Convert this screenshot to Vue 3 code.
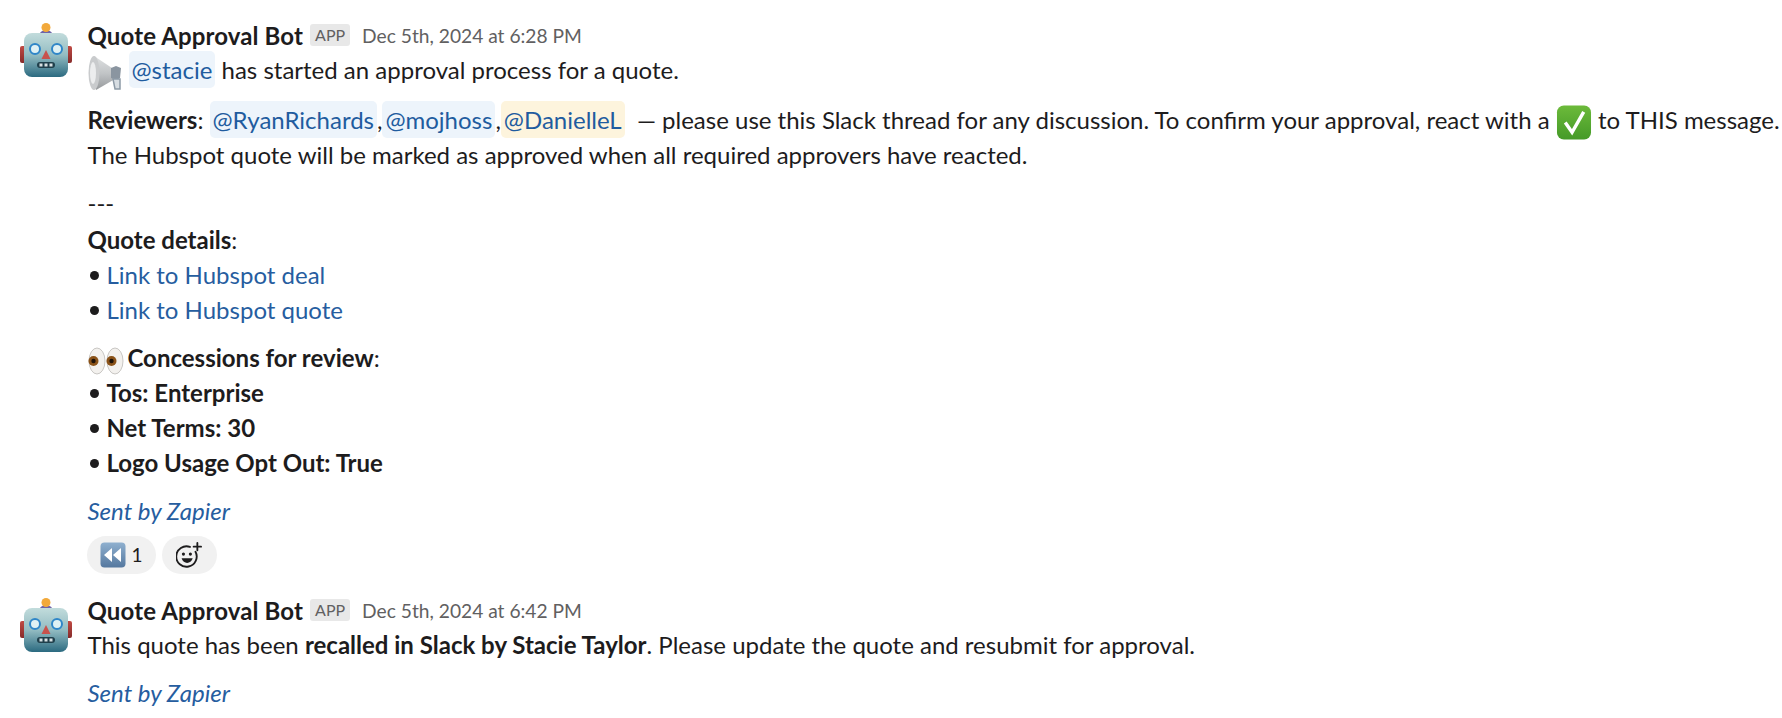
<script setup>
const concessions = ['Tos: Enterprise', 'Net Terms: 30', 'Logo Usage Opt Out: True']
</script>

<template>
  <main class="page">
    <svg class="defs" width="0" height="0" aria-hidden="true">
      <defs>
        <linearGradient id="face" x1="0" y1="0" x2="0" y2="1">
          <stop offset="0" stop-color="#c2dcdc" />
          <stop offset="0.5" stop-color="#93bcc2" />
          <stop offset="1" stop-color="#2b6a80" />
        </linearGradient>
        <linearGradient id="ear" x1="0" y1="0" x2="0" y2="1">
          <stop offset="0" stop-color="#c04a44" />
          <stop offset="1" stop-color="#862b2a" />
        </linearGradient>
        <linearGradient id="bell" x1="0" y1="0" x2="0" y2="1">
          <stop offset="0" stop-color="#dfe1e2" />
          <stop offset="0.5" stop-color="#c2c5c7" />
          <stop offset="1" stop-color="#96999c" />
        </linearGradient>
        <linearGradient id="rew" x1="0" y1="0" x2="0" y2="1">
          <stop offset="0" stop-color="#8fb0cf" />
          <stop offset="1" stop-color="#55789f" />
        </linearGradient>
        <linearGradient id="chk" x1="0" y1="0" x2="0" y2="1">
          <stop offset="0" stop-color="#6cba3a" />
          <stop offset="1" stop-color="#459a28" />
        </linearGradient>
        <symbol id="robot" viewBox="0 0 52 54">
          <rect x="0" y="23" width="6" height="17" rx="2" fill="url(#ear)" />
          <rect x="46" y="23" width="6" height="17" rx="2" fill="url(#ear)" />
          <path d="M20 11c0-5 12-5 12 0z" fill="#6f64a8" />
          <circle cx="26" cy="4.500" r="4.500" fill="#f2a93b" />
          <rect x="4" y="10" width="44" height="44" rx="8" fill="url(#face)" />
          <circle cx="15" cy="26" r="5" fill="#dff1f4" stroke="#2f86c8" stroke-width="2" />
          <circle cx="37" cy="26" r="5" fill="#dff1f4" stroke="#2f86c8" stroke-width="2" />
          <path d="M26 27l4.500 9h-9z" fill="#c8524c" />
          <rect x="17" y="39" width="18" height="6" rx="3" fill="#1f3f4b" />
          <path d="M21 40.500v3M26 40.500v3M31 40.500v3" stroke="#d7e0e2" stroke-width="3" />
        </symbol>
      </defs>
    </svg>

    <article class="message first">
      <svg class="avatar"><use href="#robot" /></svg>
      <div class="content">
        <header class="meta">
          <strong class="name">Quote Approval Bot</strong>
          <span class="badge">APP</span>
          <span class="time">Dec 5th, 2024 at 6:28 PM</span>
        </header>
        <p class="para intro">
          <svg class="emoji horn" viewBox="0 0 34 36" aria-hidden="true">
            <path d="M6 1L27 15v9L8 35z" fill="url(#bell)" />
            <ellipse cx="6" cy="18" rx="5.500" ry="17" fill="#c9cbcd" />
            <ellipse cx="5" cy="18" rx="3" ry="11" fill="#ecedee" />
            <path d="M23 13l5-2 5 2-1 10-3 2-6-2z" fill="#8a95a0" />
            <path d="M25 24h7v10h-5z" fill="#d7dde2" stroke="#8d9aa6" stroke-width="1.500" />
          </svg>
          <span class="mention">@stacie</span> has started an approval process for a quote.
        </p>
        <p class="para">
          <strong>Reviewers</strong>: <span class="mention">@RyanRichards</span>,<span class="mention">@mojhoss</span>,<span class="mention self">@DanielleL</span>
          &nbsp;— please use this Slack thread for any discussion. To confirm your approval, react with a
          <svg class="emoji check" viewBox="0 0 36 36" aria-hidden="true">
            <rect x="0.500" y="0.500" width="35" height="35" rx="7" fill="url(#chk)" />
            <path d="M9 18l7 10L28 7" fill="none" stroke="#fff" stroke-width="3.500" />
          </svg>
          to THIS message.<br />The Hubspot quote will be marked as approved when all required approvers have reacted.
        </p>
        <p class="para tight">---<br /><span class="details"><strong>Quote details</strong>:</span></p>
        <ul class="list">
          <li><a class="link">Link to Hubspot deal</a></li>
          <li><a class="link">Link to Hubspot quote</a></li>
        </ul>
        <p class="para tight">
          <svg class="emoji eyes" viewBox="0 0 36 28" aria-hidden="true">
            <ellipse cx="9" cy="14" rx="8" ry="13" fill="#f3f1ee" stroke="#c9c7c4" stroke-width="1" />
            <ellipse cx="27" cy="14" rx="8" ry="13" fill="#f3f1ee" stroke="#c9c7c4" stroke-width="1" />
            <circle cx="5.500" cy="14" r="5" fill="#8a5218" />
            <circle cx="23.500" cy="14" r="5" fill="#8a5218" />
            <circle cx="5.500" cy="14" r="2.200" fill="#1d1208" />
            <circle cx="23.500" cy="14" r="2.200" fill="#1d1208" />
          </svg>
          <strong>Concessions for review</strong>:
        </p>
        <ul class="list">
          <li v-for="item in concessions" :key="item"><strong>{{ item }}</strong></li>
        </ul>
        <a class="link sent">Sent by Zapier</a>
        <div class="reactions">
          <span class="pill">
            <svg class="rewind" viewBox="0 0 26 26" aria-hidden="true">
              <rect x="0.500" y="0.500" width="25" height="25" rx="4" fill="url(#rew)" />
              <path d="M12 6v14L4 13zM21 6v14l-8-7z" fill="#fff" />
            </svg>
            <span class="count">1</span>
          </span>
          <span class="pill add">
            <svg class="smile" viewBox="0 0 28 28" aria-hidden="true">
              <path d="M21 10.500A11 11 0 1 1 15 5.300" fill="none" stroke="#1d1c1d" stroke-width="2" stroke-linecap="round" />
              <circle cx="8" cy="13" r="1.700" fill="#1d1c1d" />
              <circle cx="15.500" cy="13" r="1.700" fill="#1d1c1d" />
              <path d="M6 17.500h12c-1 3.500-3.500 5-6 5s-5-1.500-6-5z" fill="#1d1c1d" />
              <path d="M23 1v8M19 5h8" stroke="#1d1c1d" stroke-width="2" stroke-linecap="round" />
            </svg>
          </span>
        </div>
      </div>
    </article>

    <article class="message second">
      <svg class="avatar"><use href="#robot" /></svg>
      <div class="content">
        <header class="meta">
          <strong class="name">Quote Approval Bot</strong>
          <span class="badge">APP</span>
          <span class="time">Dec 5th, 2024 at 6:42 PM</span>
        </header>
        <p class="para">This quote has been <strong>recalled in Slack by Stacie Taylor</strong>. Please update the quote and resubmit for approval.</p>
        <a class="link sent">Sent by Zapier</a>
      </div>
    </article>
  </main>
</template>

<style>
html, body { background: #fff; overflow: hidden; }
</style>

<style scoped>
.page {
  width: 1782px;
  height: 718px;
  overflow: hidden;
  font-family: Lato, "Liberation Sans", sans-serif;
  font-size: 24px;
  line-height: 35px;
  color: #1d1c1d;
}
.defs { position: absolute; }
.message { display: flex; gap: 15.5px; padding-left: 20px; }
.first { padding-top: 18px; }
.second { margin-top: 19px; }
.avatar { width: 52px; height: 54px; flex: none; margin-top: 5px; }
.content { flex: none; width: 1700px; }
.meta { display: flex; align-items: center; height: 34px; }
.name { font-weight: 700; letter-spacing: 0.12px; }
.badge {
  margin-left: 7px;
  padding: 0 5px;
  height: 22px;
  line-height: 22px;
  font-size: 16px;
  background: #e8e8e8;
  border-radius: 3px;
  color: #616061;
}
.time { margin-left: 12px; font-size: 19.2px; color: #616061; }
.para { margin: 0 0 13px; white-space: nowrap; }
.intro { margin-bottom: 15px; }
.tight { margin-bottom: 0; }
.details { display: inline-block; padding-top: 2px; }
.mention {
  padding: 4px 3px;
  color: #1f5c9f;
  background: #edf4fb;
  border-radius: 5px;
}
.self { background: #fdf4dd; }
.link { color: #265d9f; }
.list { list-style: none; margin: 0 0 13px; padding: 0; }
.list li { position: relative; padding-left: 19px; }
.list li::before {
  content: "";
  position: absolute;
  left: 2px;
  top: 14px;
  width: 9px;
  height: 9px;
  border-radius: 50%;
  background: #1d1c1d;
}
.sent { display: block; font-style: italic; }
.emoji { display: inline-block; vertical-align: middle; }
.horn { width: 34px; height: 36px; margin: -4px 7px -4px 0; }
.check { width: 36px; height: 35px; margin-block: -4px; }
.eyes { width: 36px; height: 28px; margin-right: 4px; }
.reactions { display: flex; gap: 6px; margin: 8px 0 0 -1px; }
.pill {
  display: inline-flex;
  align-items: center;
  height: 38px;
  padding: 0 13px;
  background: #f1f1f1;
  border-radius: 19px;
  font-size: 19px;
}
.rewind { width: 26px; height: 26px; margin-right: 6px; }
.count { line-height: 38px; }
.add { padding: 0 14.5px; }
.smile { width: 26px; height: 26px; }
</style>
